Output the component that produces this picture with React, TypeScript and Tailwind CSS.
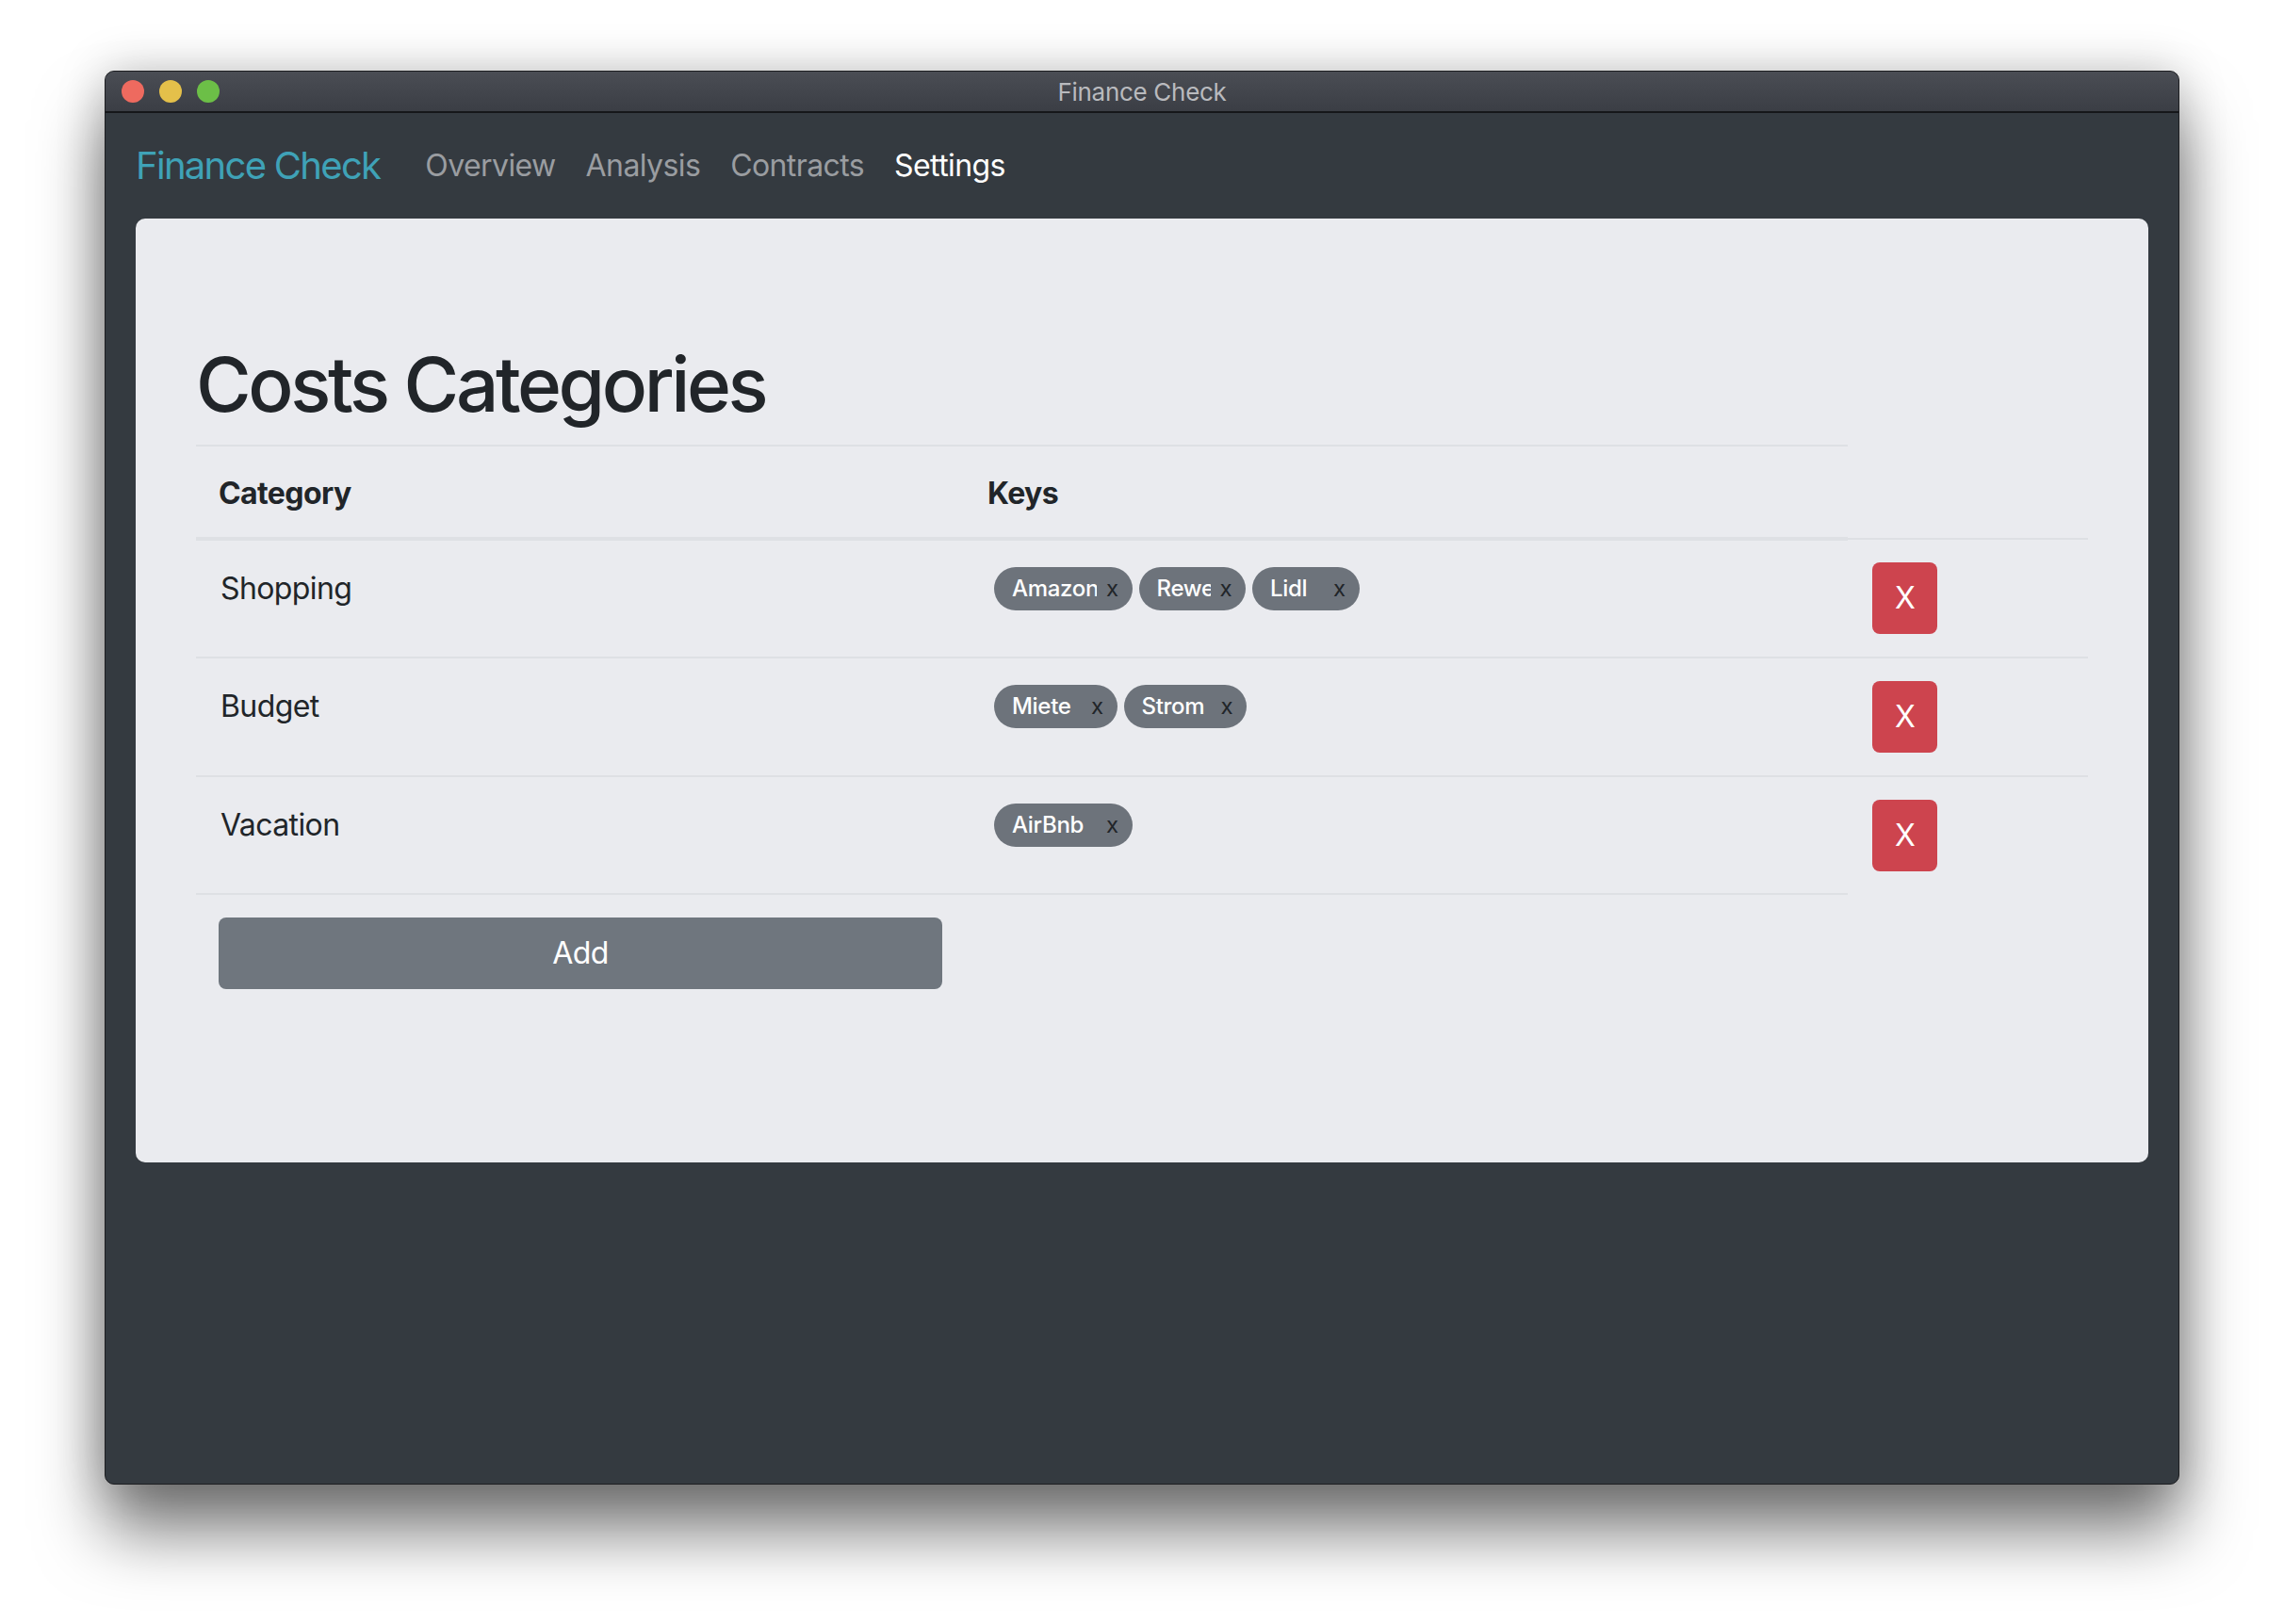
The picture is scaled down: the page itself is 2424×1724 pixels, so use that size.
const font = "font-['Inter','Liberation_Sans',sans-serif]";

type Row = { name: string; keys: string[] };

const rows: Row[] = [
  { name: "Shopping", keys: ["Amazon", "Rewe", "Lidl"] },
  { name: "Budget", keys: ["Miete", "Strom"] },
  { name: "Vacation", keys: ["AirBnb"] },
];

function keyWidth(k: string) {
  if (k.length >= 6) return "w-[90px]";
  if (k.length === 5) return "w-[74px]";
  return "w-[57px]";
}

function KeyBadge({ label }: { label: string }) {
  return (
    <div className="flex h-[46px] items-center rounded-full bg-[#6d737b] pl-[19px] pr-[15px]">
      <span
        className={
          keyWidth(label) +
          " overflow-hidden whitespace-nowrap text-[24px] font-medium leading-[46px] tracking-[-0.3px] text-white"
        }
      >
        {label}
      </span>
      <span className="ml-[10px] text-[24px] leading-[46px] text-[#212529]">x</span>
    </div>
  );
}

export default function App() {
  return (
    <div className={"min-h-[1724px] w-[2424px] bg-white pl-[111px] pt-[75px] " + font}>
      <div className="flex h-[1501px] w-[2202px] flex-col overflow-hidden rounded-[10px] border border-[#1d1e21] bg-[#343a40] shadow-[0_50px_70px_rgba(0,0,0,0.52),0_0_50px_rgba(0,0,0,0.22)]">
        {/* title bar */}
        <div className="relative flex h-[44px] items-center border-b-2 border-[#16171a] bg-gradient-to-b from-[#4a4d54] to-[#3b3e45] pl-[17px]">
          <div className="flex gap-[16px]">
            <span className="h-[24px] w-[24px] rounded-full bg-[#ee6a5f]" />
            <span className="h-[24px] w-[24px] rounded-full bg-[#e4c04a]" />
            <span className="h-[24px] w-[24px] rounded-full bg-[#6cbf47]" />
          </div>
          <div className="absolute inset-0 flex items-center justify-center text-[26px] tracking-[-0.3px] text-[#b9babe]">
            Finance Check
          </div>
        </div>

        {/* navbar */}
        <nav className="flex items-center px-[32px] py-[16px]">
          <span className="mr-[32px] py-[10px] text-[40px] leading-[60px] tracking-[-1.7px] text-[#3fa2b7]">
            Finance Check
          </span>
          <div className="flex text-[32px] leading-[48px] tracking-[-0.6px]">
            <span className="px-[16px] py-[16px] text-[#9a9da1]">Overview</span>
            <span className="px-[16px] py-[16px] text-[#9a9da1]">Analysis</span>
            <span className="px-[16px] py-[16px] text-[#9a9da1]">Contracts</span>
            <span className="px-[16px] py-[16px] text-white">Settings</span>
          </div>
        </nav>

        {/* jumbotron */}
        <div className="mx-[32px] rounded-[10px] bg-[#eaebef] px-[64px] pb-[128px] pt-[128px] text-[#212529]">
          <h1 className="mb-[16px] text-[80px] font-medium leading-[96px] tracking-[-3.4px]">
            Costs Categories
          </h1>
          <table className="mb-[32px] w-full border-collapse text-left text-[32px] leading-[48px] tracking-[-0.6px]">
            <thead>
              <tr>
                <th className="w-[816px] border-b-4 border-t-2 border-[#dee0e4] px-[24px] pb-[22px] pt-[26px] font-bold">
                  Category
                </th>
                <th className="w-[937px] border-b-4 border-t-2 border-[#dee0e4] px-[24px] pb-[22px] pt-[26px] font-bold">
                  Keys
                </th>
              </tr>
            </thead>
            <tbody>
              {rows.map((r) => (
                <tr key={r.name}>
                  <td className="border-t-2 border-[#dee0e4] px-[24px] pb-[21px] pt-[27px] align-top">
                    <span className="ml-[2px]">{r.name}</span>
                  </td>
                  <td className="border-t-2 border-[#dee0e4] p-[24px] align-top">
                    <div className="flex gap-[7px] pl-[7px] pt-[4px]">
                      {r.keys.map((k) => (
                        <KeyBadge key={k} label={k} />
                      ))}
                    </div>
                  </td>
                  <td className="border-t-2 border-[#dee0e4] p-[24px] align-top">
                    <button className="ml-[2px] h-[76px] rounded-[8px] bg-[#cd444e] px-[24px] text-[32px] leading-[48px] text-white">
                      X
                    </button>
                  </td>
                </tr>
              ))}
              <tr>
                <td className="border-t-2 border-[#dee0e4] p-[24px]">
                  <button className="h-[76px] w-full rounded-[8px] bg-[#6f767e] text-[32px] leading-[48px] text-white">
                    Add
                  </button>
                </td>
                <td className="border-t-2 border-[#dee0e4] p-[24px]" />
              </tr>
            </tbody>
          </table>
        </div>
      </div>
    </div>
  );
}
